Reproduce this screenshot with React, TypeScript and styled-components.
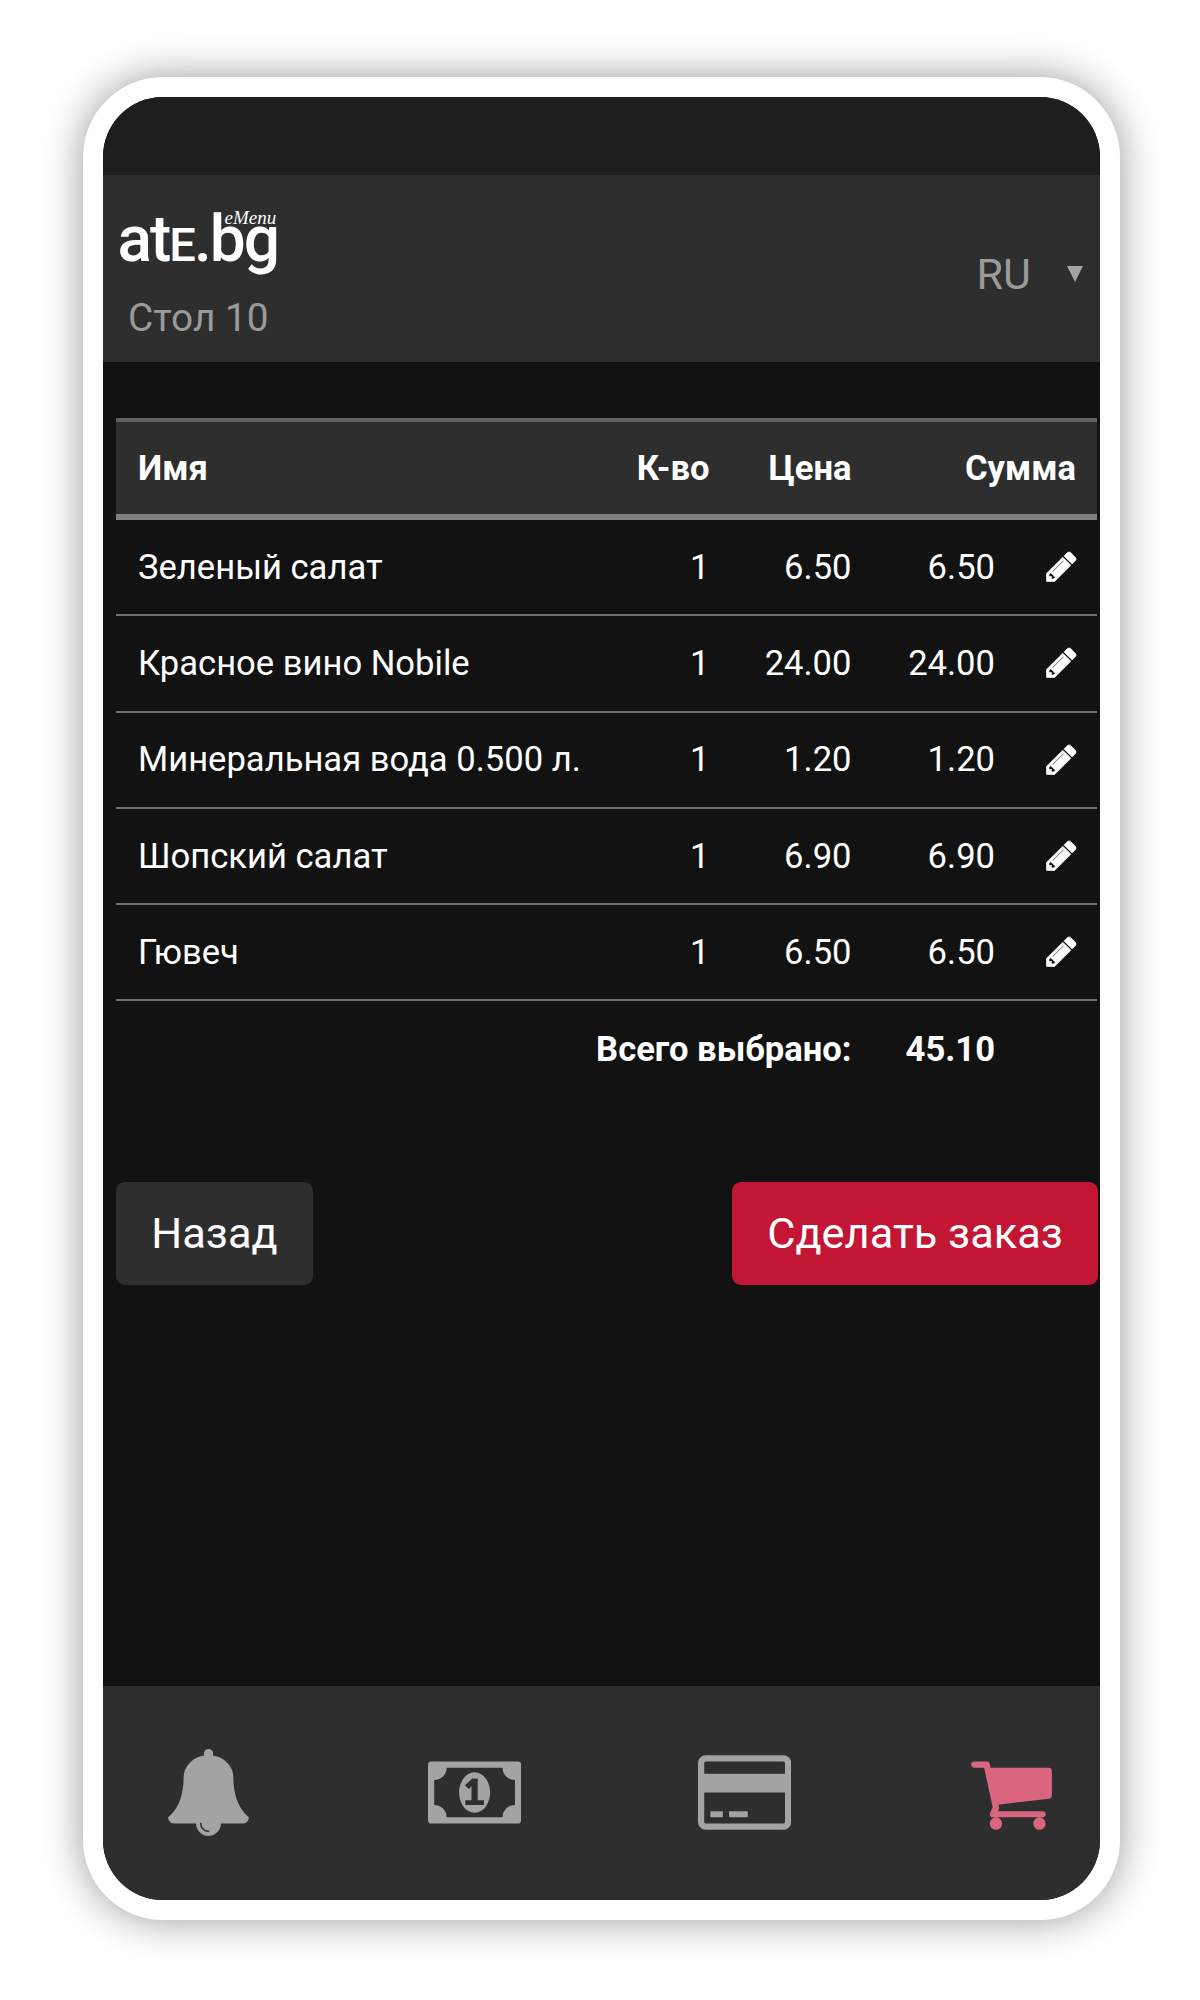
import React from "react";
import styled, { createGlobalStyle } from "styled-components";

const GlobalStyle = createGlobalStyle`
  *, *::before, *::after { box-sizing: border-box; }
  body {
    margin: 0;
    background: #fff;
    font-family: Roboto, "Noto Sans", sans-serif;
  }
`;

const Page = styled.div`
  width: 1200px;
  height: 2000px;
  padding: 77px 80px 80px 82.5px;
  overflow: hidden;
`;

const Phone = styled.div`
  width: 1037.5px;
  height: 1843px;
  padding: 20px;
  border-radius: 80px;
  background: #fff;
  box-shadow: 0 0 42px rgba(0, 0, 0, 0.4);
`;

const Screen = styled.div`
  display: flex;
  flex-direction: column;
  height: 100%;
  border-radius: 60px;
  overflow: hidden;
  background: #121212;
`;

const StatusBar = styled.div`
  flex: none;
  height: 78px;
  background: #1e1e1e;
`;

const Header = styled.header`
  flex: none;
  display: flex;
  justify-content: space-between;
  height: 187px;
  padding: 28px 17px 0;
  background: #2e2e2e;
  color: #9a9a9a;
`;

const Brand = styled.div`
  display: flex;
  flex-direction: column;
`;

const Logo = styled.div`
  position: relative;
  height: 92px;
  margin-left: -2px;
  color: #fff;
  font-size: 64px;
  font-weight: 500;
  line-height: 73px;
  letter-spacing: -2px;
  white-space: nowrap;
`;

const SmallCap = styled.span`
  font-size: 47px;
`;

const LogoScript = styled.span`
  position: absolute;
  left: 107px;
  top: 4px;
  font: italic 19px/22px "Liberation Serif", serif;
  letter-spacing: 0;
`;

const TableLabel = styled.div`
  padding-left: 8.5px;
  font-size: 38.8px;
  line-height: 46px;
`;

const Language = styled.div`
  display: flex;
  align-items: center;
  gap: 36px;
  height: 142px;
  font-size: 43px;
  line-height: 52px;
`;

const Caret = styled.span`
  width: 0;
  height: 0;
  border: 8px solid transparent;
  border-top: 16px solid #a4a4a4;
  border-bottom: 0;
`;

const Content = styled.main`
  flex: 1;
  padding: 56px 2px 0 13.5px;
  color: #fff;
`;

const Order = styled.div`
  margin-right: 1px;
  font-size: 34.6px;
  line-height: 40px;
`;

const Row = styled.div<{ $kind?: "head" | "total" }>`
  display: grid;
  grid-template-columns: 1fr 120px 142px 143.5px 81px;
  align-items: center;
  height: ${(p) => (p.$kind === "head" ? 102 : 96.3)}px;
  padding: 0 21px 1px 22px;
  font-weight: ${(p) => (p.$kind ? 700 : 400)};
  border-bottom: ${(p) => (p.$kind === "total" ? "0" : "2.5px solid #717171")};
  ${(p) =>
    p.$kind === "head" &&
    `
    background: #2e2e2e;
    border-top: 4px solid #616161;
    border-bottom: 6px solid #808080;
  `}
`;

const Cell = styled.div<{ $span?: number; $left?: boolean }>`
  grid-column: span ${(p) => p.$span ?? 1};
  text-align: ${(p) => (p.$left ? "left" : "right")};
  white-space: nowrap;
`;

const EditButton = styled.button`
  justify-self: end;
  display: flex;
  margin-right: -3px;
  padding: 0;
  border: 0;
  background: none;
  color: #fff;
`;

const Actions = styled.div`
  display: flex;
  justify-content: space-between;
  margin-top: 84.5px;
`;

const Button = styled.button<{ $primary?: boolean }>`
  width: ${(p) => (p.$primary ? 366 : 197)}px;
  height: 103px;
  padding: 0;
  border: 0;
  border-radius: 9px;
  background: ${(p) => (p.$primary ? "#c31635" : "#2e2e2e")};
  color: #fff;
  font: 400 43.4px/50px Roboto, "Noto Sans", sans-serif;
`;

const TabBar = styled.nav`
  flex: none;
  display: flex;
  justify-content: space-between;
  height: 214px;
  padding: 62.5px 45.5px 0 62px;
  background: #2e2e2e;
`;

const Tab = styled.button<{ $active?: boolean }>`
  display: flex;
  align-items: flex-start;
  padding: 0;
  border: 0;
  background: none;
  color: ${(p) => (p.$active ? "#d9657f" : "#a3a3a3")};
`;

type GlyphProps = { d: string; size: number; w?: number; weight?: number };

const Glyph = ({ d, size, w = 1792, weight = 0 }: GlyphProps) => (
  <svg
    width={(size * w) / 1792}
    height={size}
    viewBox={`0 0 ${w} 1792`}
    fill="currentColor"
    stroke={weight ? "currentColor" : "none"}
    strokeWidth={weight}
  >
    <path d={d} />
  </svg>
);

const pencil =
  "M491 1536l91-91-235-235-91 91v107h128v128h107zm523-928q0-22-22-22-10 0-17 7l-542 542q-7 7-7 17 0 22 22 22 10 0 17-7l542-542q7-7 7-17zm-54-192l416 416-832 832h-416v-416zm683 96q0 53-37 90l-166 166-416-416 166-165q36-38 90-38 53 0 91 38l235 234q37 39 37 91z";
const bell =
  "M912 1696q0-16-16-16-59 0-101.5-42.5t-42.5-101.5q0-16-16-16t-16 16q0 73 51.5 124.5t124.5 51.5q16 0 16-16zm816-288q0 52-38 90t-90 38h-448q0 106-75 181t-181 75-181-75-75-181h-448q-52 0-90-38t-38-90q50-42 91-88t85-119.5 74.5-158.5 50-206 19.5-260q0-152 117-282.5t307-158.5q-8-19-8-39 0-40 28-68t68-28 68 28 28 68q0 20-8 39 190 28 307 158.5t117 282.5q0 139 19.5 260t50 206 74.5 158.5 85 119.5 91 88z";
const money =
  "M768 1152h384v-96h-128v-448h-114l-148 137 77 80q42-37 55-57h2v288h-128v96zm512-256q0 70-21 142t-59.5 134-101.5 101-138 39-138-39-101.5-101-59.5-134-21-142 21-142 59.5-134 101.5-101 138-39 138 39 101.5 101 59.5 134 21 142zm512 256v-512q-106 0-181-75t-75-181h-1152q0 106-75 181t-181 75v512q106 0 181 75t75 181h1152q0-106 75-181t181-75zm128-832v1152q0 26-19 45t-45 19h-1792q-26 0-45-19t-19-45v-1152q0-26 19-45t45-19h1792q26 0 45 19t19 45z";
const card =
  "M1760 128q66 0 113 47t47 113v1216q0 66-47 113t-113 47h-1600q-66 0-113-47t-47-113v-1216q0-66 47-113t113-47h1600zm-1600 128q-13 0-22.5 9.5t-9.5 22.5v224h1664v-224q0-13-9.5-22.5t-22.5-9.5h-1600zm1600 1280q13 0 22.5-9.5t9.5-22.5v-608h-1664v608q0 13 9.5 22.5t22.5 9.5h1600zm-1504-128v-128h256v128h-256zm384 0v-128h384v128h-384z";
const cart =
  "M704 1536q0 52-38 90t-90 38-90-38-38-90 38-90 90-38 90 38 38 90zm896 0q0 52-38 90t-90 38-90-38-38-90 38-90 90-38 90 38 38 90zm128-1088v512q0 24-16.5 42.5t-40.5 21.5l-1044 122q13 60 13 70 0 16-24 64h920q26 0 45 19t19 45-19 45-45 19h-1024q-26 0-45-19t-19-45q0-11 8-31.5t16-36 21.5-40 15.5-29.5l-177-823h-204q-26 0-45-19t-19-45 19-45 45-19h256q16 0 28.5 6.5t19.5 15.5 13 24.5 8 26 5.5 29.5 4.5 26h1201q26 0 45 19t19 45z";

const items = [
  { name: "Зеленый салат", qty: 1, price: 6.5 },
  { name: "Красное вино Nobile", qty: 1, price: 24 },
  { name: "Минеральная вода 0.500 л.", qty: 1, price: 1.2 },
  { name: "Шопский салат", qty: 1, price: 6.9 },
  { name: "Гювеч", qty: 1, price: 6.5 },
];

export default function App() {
  const total = items.reduce((sum, i) => sum + i.qty * i.price, 0);
  return (
    <Page>
      <GlobalStyle />
      <Phone>
        <Screen>
          <StatusBar />
          <Header>
            <Brand>
              <Logo>
                at<SmallCap>E</SmallCap>.bg
                <LogoScript>eMenu</LogoScript>
              </Logo>
              <TableLabel>Стол 10</TableLabel>
            </Brand>
            <Language>
              RU
              <Caret />
            </Language>
          </Header>
          <Content>
            <Order>
              <Row $kind="head">
                <Cell $left>Имя</Cell>
                <Cell>К-во</Cell>
                <Cell>Цена</Cell>
                <Cell $span={2}>Сумма</Cell>
              </Row>
              {items.map((item) => (
                <Row key={item.name}>
                  <Cell $left>{item.name}</Cell>
                  <Cell>{item.qty}</Cell>
                  <Cell>{item.price.toFixed(2)}</Cell>
                  <Cell>{(item.qty * item.price).toFixed(2)}</Cell>
                  <EditButton aria-label="Edit">
                    <Glyph d={pencil} size={35} weight={32} />
                  </EditButton>
                </Row>
              ))}
              <Row $kind="total">
                <Cell $span={3}>Всего выбрано:</Cell>
                <Cell>{total.toFixed(2)}</Cell>
              </Row>
            </Order>
            <Actions>
              <Button>Назад</Button>
              <Button $primary>Сделать заказ</Button>
            </Actions>
          </Content>
          <TabBar>
            <Tab aria-label="Bell">
              <Glyph d={bell} size={87} />
            </Tab>
            <Tab aria-label="Cash">
              <Glyph d={money} size={87} w={1920} />
            </Tab>
            <Tab aria-label="Card">
              <Glyph d={card} size={87} w={1920} />
            </Tab>
            <Tab aria-label="Cart" $active>
              <Glyph d={cart} size={87} />
            </Tab>
          </TabBar>
        </Screen>
      </Phone>
    </Page>
  );
}
